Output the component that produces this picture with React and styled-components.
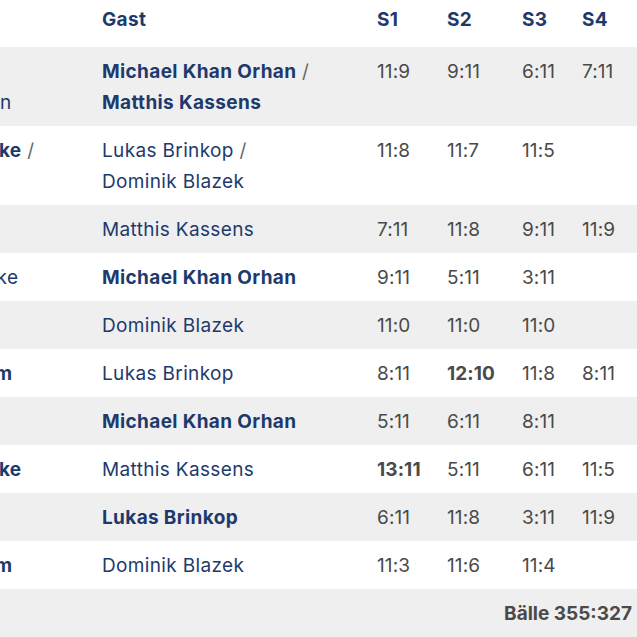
import React from "react";
import styled, { createGlobalStyle } from "styled-components";

const Global = createGlobalStyle`
  html, body { margin: 0; padding: 0; background: #ffffff; overflow: hidden; }
  body { font-family: Inter, "Noto Sans", "Liberation Sans", sans-serif; }
`;

const Viewport = styled.div`
  width: 637px;
  height: 637px;
  overflow: hidden;
`;

const Table = styled.table`
  border-collapse: collapse;
  table-layout: fixed;
  width: 745px;
  margin-left: -101px;
  font-size: 19px;
  line-height: 31px;
  letter-spacing: 0.35px;
`;

const HeadCell = styled.th`
  text-align: left;
  font-weight: 700;
  color: #1e3a6d;
  padding: 4px 12px 12px 12px;
  white-space: nowrap;
`;

const Row = styled.tr`
  background: ${(p) => (p.$shaded ? "#efefef" : "#ffffff")};
`;

const Cell = styled.td`
  vertical-align: top;
  padding: 9px 12px 8px 12px;
  white-space: nowrap;
`;

const PlayerLine = styled.div`
  color: #1e3a6d;
  font-weight: ${(p) => (p.$winner ? 700 : 400)};
`;

const Slash = styled.span`
  color: #666666;
  font-weight: 400;
`;

const Score = styled.span`
  color: #4a4a4a;
  letter-spacing: 0.1px;
  font-weight: ${(p) => (p.$bold ? 700 : 400)};
`;

const FooterCell = styled.td`
  padding: 9px 12px 8px 12px;
  text-align: right;
  color: #4a4a4a;
  font-weight: 700;
  letter-spacing: 0;
  white-space: nowrap;
`;

const matches = [
  { home: ["Jan Ott", "Tom Bruhn"], homeWin: false, guest: ["Michael Khan Orhan", "Matthis Kassens"], sets: ["11:9", "9:11", "6:11", "7:11"] },
  { home: ["Tim Gehrke", "Ben Ruf"], homeWin: true, guest: ["Lukas Brinkop", "Dominik Blazek"], sets: ["11:8", "11:7", "11:5", ""] },
  { home: ["Jan Ott"], homeWin: true, guest: ["Matthis Kassens"], sets: ["7:11", "11:8", "9:11", "11:9"] },
  { home: ["Tim Gehrke"], homeWin: false, guest: ["Michael Khan Orhan"], sets: ["9:11", "5:11", "3:11", ""] },
  { home: ["Ben Ruf"], homeWin: true, guest: ["Dominik Blazek"], sets: ["11:0", "11:0", "11:0", ""] },
  { home: ["Timo Blum"], homeWin: true, guest: ["Lukas Brinkop"], sets: ["8:11", "12:10", "11:8", "8:11"], bold: [1] },
  { home: ["Jan Ott"], homeWin: false, guest: ["Michael Khan Orhan"], sets: ["5:11", "6:11", "8:11", ""] },
  { home: ["Tim Gehrke"], homeWin: true, guest: ["Matthis Kassens"], sets: ["13:11", "5:11", "6:11", "11:5"], bold: [0] },
  { home: ["Ben Ruf"], homeWin: false, guest: ["Lukas Brinkop"], sets: ["6:11", "11:8", "3:11", "11:9"] },
  { home: ["Timo Blum"], homeWin: true, guest: ["Dominik Blazek"], sets: ["11:3", "11:6", "11:4", ""] },
];

function Players({ names, winner }) {
  return names.map((n, i) => (
    <PlayerLine key={i} $winner={winner}>
      {n}
      {i < names.length - 1 && <Slash> /</Slash>}
    </PlayerLine>
  ));
}

export default function App() {
  return (
    <Viewport>
      <Global />
      <Table>
        <colgroup>
          <col style={{ width: 191 }} />
          <col style={{ width: 275 }} />
          <col style={{ width: 70 }} />
          <col style={{ width: 75 }} />
          <col style={{ width: 60 }} />
          <col style={{ width: 74 }} />
        </colgroup>
        <thead>
          <tr>
            <HeadCell>Heim</HeadCell>
            <HeadCell>Gast</HeadCell>
            <HeadCell>S1</HeadCell>
            <HeadCell>S2</HeadCell>
            <HeadCell>S3</HeadCell>
            <HeadCell>S4</HeadCell>
          </tr>
        </thead>
        <tbody>
          {matches.map((m, i) => (
            <Row key={i} $shaded={i % 2 === 0}>
              <Cell>
                <Players names={m.home} winner={m.homeWin} />
              </Cell>
              <Cell>
                <Players names={m.guest} winner={!m.homeWin} />
              </Cell>
              {m.sets.map((s, j) => (
                <Cell key={j}>
                  <Score $bold={m.bold && m.bold.includes(j)}>{s}</Score>
                </Cell>
              ))}
            </Row>
          ))}
          <Row $shaded>
            <FooterCell colSpan={6}>Bälle 355:327</FooterCell>
          </Row>
        </tbody>
      </Table>
    </Viewport>
  );
}
